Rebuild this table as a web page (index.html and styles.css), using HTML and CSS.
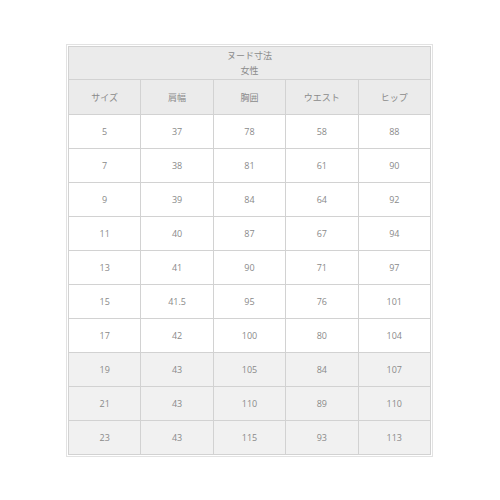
FILE: index.html
```html
<!DOCTYPE html>
<html lang="ja">
<head>
<meta charset="utf-8">
<link rel="stylesheet" href="styles.css">
</head>
<body>
<div class="frame">
<table class="size-table">
<thead>
<tr class="title-row"><th colspan="5">ヌード寸法<br>女性</th></tr>
<tr class="head-row"><th>サイズ</th><th>肩幅</th><th>胸囲</th><th>ウエスト</th><th>ヒップ</th></tr>
</thead>
<tbody>
<tr><td>5</td><td>37</td><td>78</td><td>58</td><td>88</td></tr>
<tr><td>7</td><td>38</td><td>81</td><td>61</td><td>90</td></tr>
<tr><td>9</td><td>39</td><td>84</td><td>64</td><td>92</td></tr>
<tr><td>11</td><td>40</td><td>87</td><td>67</td><td>94</td></tr>
<tr><td>13</td><td>41</td><td>90</td><td>71</td><td>97</td></tr>
<tr><td>15</td><td>41.5</td><td>95</td><td>76</td><td>101</td></tr>
<tr><td>17</td><td>42</td><td>100</td><td>80</td><td>104</td></tr>
<tr class="shaded"><td>19</td><td>43</td><td>105</td><td>84</td><td>107</td></tr>
<tr class="shaded"><td>21</td><td>43</td><td>110</td><td>89</td><td>110</td></tr>
<tr class="shaded"><td>23</td><td>43</td><td>115</td><td>93</td><td>113</td></tr>
</tbody>
</table>
</div>
</body>
</html>
```

FILE: styles.css
```css
html, body {
  margin: 0;
  padding: 0;
  background: #ffffff;
}
body {
  font-family: "Open Sans", "Noto Sans CJK JP", sans-serif;
  color: #8a8a8a;
  font-size: 9px;
}
.frame {
  width: 367px;
  margin: 44px 0 0 66px;
  border: 1px solid #e2e2e2;
  padding: 1px;
  box-sizing: border-box;
}
.size-table {
  width: 100%;
  border-collapse: collapse;
  table-layout: fixed;
}
.size-table th,
.size-table td {
  border: 1px solid #d2d2d2;
  text-align: center;
  font-weight: normal;
  padding: 0;
  height: 33px;
}
.size-table th {
  background: #ebebeb;
}
.title-row th {
  height: 32px;
  line-height: 15px;
}
.head-row th {
  height: 34px;
}
.shaded td {
  background: #f1f1f1;
}
```
